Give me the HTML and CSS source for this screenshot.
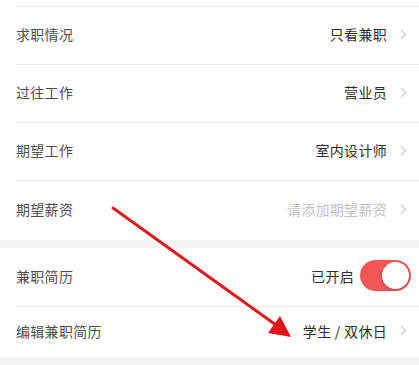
FILE: index.html
```html
<!DOCTYPE html>
<html lang="zh">
<head>
<meta charset="utf-8">
<link rel="stylesheet" href="styles.css">
</head>
<body>
<div class="page">
  <div class="stub"></div>
  <section class="group">
    <div class="row">
      <span class="label">求职情况</span>
      <span class="value">只看兼职</span>
      <svg class="chev" width="7" height="11" viewBox="0 0 7 11"><path d="M1 1 L5.5 5.5 L1 10" fill="none" stroke="#c9c9c9" stroke-width="1.2"/></svg>
    </div>
    <div class="row">
      <span class="label">过往工作</span>
      <span class="value">营业员</span>
      <svg class="chev" width="7" height="11" viewBox="0 0 7 11"><path d="M1 1 L5.5 5.5 L1 10" fill="none" stroke="#c9c9c9" stroke-width="1.2"/></svg>
    </div>
    <div class="row">
      <span class="label">期望工作</span>
      <span class="value">室内设计师</span>
      <svg class="chev" width="7" height="11" viewBox="0 0 7 11"><path d="M1 1 L5.5 5.5 L1 10" fill="none" stroke="#c9c9c9" stroke-width="1.2"/></svg>
    </div>
    <div class="row last">
      <span class="label">期望薪资</span>
      <span class="value placeholder">请添加期望薪资</span>
      <svg class="chev" width="7" height="11" viewBox="0 0 7 11"><path d="M1 1 L5.5 5.5 L1 10" fill="none" stroke="#c9c9c9" stroke-width="1.2"/></svg>
    </div>
  </section>
  <div class="gap"></div>
  <section class="group">
    <div class="row first">
      <span class="label">兼职简历</span>
      <span class="value">已开启</span>
      <span class="switch on"><span class="knob"></span></span>
    </div>
    <div class="row short">
      <span class="label">编辑兼职简历</span>
      <span class="value">学生 / 双休日</span>
      <svg class="chev" width="7" height="11" viewBox="0 0 7 11"><path d="M1 1 L5.5 5.5 L1 10" fill="none" stroke="#c9c9c9" stroke-width="1.2"/></svg>
    </div>
  </section>
  <div class="gap"></div>
  <svg class="arrow" width="419" height="365" viewBox="0 0 419 365">
    <line x1="113" y1="208" x2="276" y2="325" stroke="#df1a1f" stroke-width="3" stroke-linecap="round"/>
    <polygon points="291,337 268,333 280,316" fill="#e0141a"/>
  </svg>
</div>
</body>
</html>
```
FILE: styles.css
```css
* { box-sizing: border-box; margin: 0; padding: 0; }
html, body { background: #ffffff; }
body {
  margin: 0;
  width: 419px;
  height: 365px;
  overflow: hidden;
  font-family: "Noto Sans CJK SC", "Noto Sans", sans-serif;
  font-size: 14px;
}
.page { position: relative; width: 419px; height: 365px; }
.stub { height: 6px; background: #fff; }
.group { background: #fff; }
.row {
  height: 58px;
  margin-left: 16px;
  padding-right: 12px;
  padding-bottom: 3px;
  display: flex;
  align-items: center;
  border-top: 1px solid #ededed;
}
.row.last { height: 60px; }
.row.first { border-top: none; }
.row.short { height: 51px; }
.label { color: #4f4f4f; flex: 1; letter-spacing: 0.3px; }
.value { color: #2e2e2e; letter-spacing: 0.3px; margin-right: 13px; }
.value.placeholder { color: #c2c2c2; }
.chev { display: block; }
.switch {
  width: 51px;
  height: 31px;
  border-radius: 16px;
  background: #f25757;
  position: relative;
  margin-right: -4px;
  margin-left: -7px;
}
.knob {
  position: absolute;
  right: 2px;
  top: 2px;
  width: 27px;
  height: 27px;
  border-radius: 50%;
  background: #fff;
  box-shadow: 0 1px 3px rgba(0,0,0,0.3);
}
.gap { height: 8px; background: #f4f4f4; }
.arrow { position: absolute; left: 0; top: 0; pointer-events: none; }
```
